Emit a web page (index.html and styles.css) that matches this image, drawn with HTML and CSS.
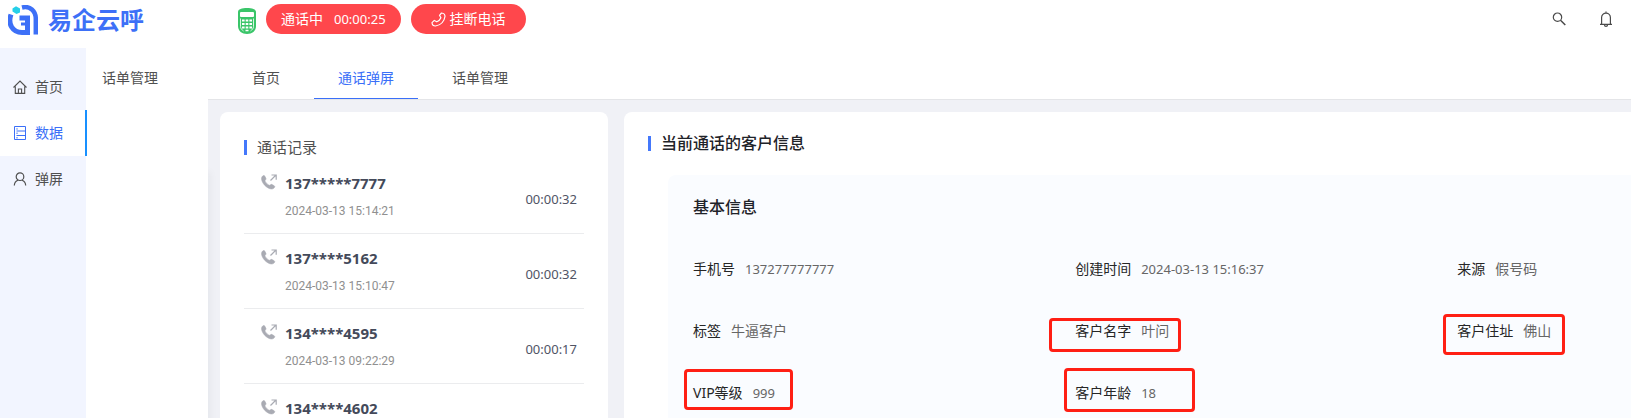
FILE: index.html
```
<!DOCTYPE html>
<html lang="zh-CN">
<head>
    <meta charset="UTF-8">
    <meta name="viewport" content="width=device-width, initial-scale=1.0">
    <title>易企云呼</title>
    <link rel="stylesheet" href="styles.css">
</head>
<body>
    <svg width="0" height="0" class="sprite" aria-hidden="true">
        <symbol id="call-out" viewBox="0 0 16 16">
            <path d="M1.2 2.600C2 1.400 3.200 1.200 3.700 2l1.200 2.300c.3.600.1 1.100-.5 1.600-.5.400-.5.900-.2 1.500.8 1.600 2 2.800 3.600 3.700.6.300 1.100.3 1.500-.2.5-.6 1.100-.7 1.700-.4l2.200 1.300c.8.500.7 1.600-.5 2.500-1.500 1-3.400.8-5.500-.3C4.600 12.600 2.200 10 1.100 7.200.4 5.300.3 3.800 1.200 2.600z" fill="#a9abb3" stroke="#a9abb3" stroke-width=".6"/>
            <path d="M9.500 6.500L14.500 1.500M10.500 1h4.700v4.700" fill="none" stroke="#a9abb3" stroke-width="1.200"/>
        </symbol>
    </svg>

    <header class="header">
        <a class="logo" href="#">
            <svg width="30" height="30" viewBox="0 0 30 30" fill="none" aria-hidden="true">
                <path d="M14 2.500C22 .5 27.800 6 27.800 14v15.500" stroke="#3d70f7" stroke-width="4.500"/>
                <path d="M3 9.500C-.5 19 4.500 27.500 14 27.500h5.500V13h-8" stroke="#3d70f7" stroke-width="5"/>
                <path d="M13 19h7" stroke="#3d70f7" stroke-width="3"/>
                <path d="M8 1.200l4 2.200v4L8.500 9 4.500 6.500v-3z" fill="#25cfe8"/>
            </svg>
            <span>易企云呼</span>
        </a>
        <div class="call-bar">
            <svg class="handset" width="18" height="26" viewBox="0 0 18 26" aria-hidden="true">
                <path d="M0 4C0 1 4 0 9 0s9 1 9 4v14c0 5-4 8-9 8s-9-3-9-8z" fill="#3ac569"/>
                <rect x="2" y="4" width="14" height="5" rx="1" fill="#fff"/>
                <path d="M2.500 10.500v8c0 2 1.500 3.500 3 4.500M15.500 10.500v8c0 2-1.500 3.500-3 4.500" fill="none" stroke="#fff" stroke-width=".8"/>
                <path d="M4 12.500h10M4 16h10M4 19.500h10" stroke="#fff" stroke-width="2.200" stroke-dasharray="2.600 1.100"/>
                <path d="M7.500 22.500h3" stroke="#fff" stroke-width="1.500"/>
            </svg>
            <button class="pill" type="button">通话中 <span class="num">00:00:25</span></button>
            <button class="pill hang-up" type="button">
                <svg width="15" height="15" viewBox="0 0 15 15" fill="none" stroke="#fff" stroke-width="1.200" stroke-linejoin="round" aria-hidden="true">
                    <path d="M10.500 1l-2 2.300 1.400 2.400c-.8 1.900-2.200 3.300-4.100 4.100L3.300 8.400 1 10.700C1.200 13 2.500 14 4.500 14 9.800 13 13.200 9.500 14 4.500 14 2.500 12.800 1.200 10.500 1z"/>
                </svg>
                挂断电话
            </button>
        </div>
        <div class="tools">
            <button type="button" aria-label="搜索">
                <svg width="14" height="14" viewBox="0 0 14 14" fill="none" stroke="#4a4a4a" stroke-width="1.200">
                    <circle cx="5.500" cy="5.200" r="4.200"/>
                    <path d="M8.500 8.200l4.800 4.800" stroke-width="1.500"/>
                </svg>
            </button>
            <button type="button" aria-label="通知">
                <svg width="14" height="16" viewBox="0 0 14 16" fill="none" stroke="#4a4a4a" stroke-width="1.200">
                    <path d="M1 13.300h12M2.600 13V6.500a4.400 4.400 0 0 1 8.800 0V13M5.500 14c0 1.800 3 1.800 3 0M7 .6v1.500"/>
                </svg>
            </button>
        </div>
    </header>

    <div class="layout">
        <nav class="sidebar">
            <a href="#">
                <svg width="14" height="14" viewBox="0 0 14 14" fill="none" stroke="currentColor" stroke-width="1.100">
                    <path d="M.5 7.500L7 1l6.500 6.500M2.300 6.500v6.900h9.400V6.500M5.400 13.400V9h3.200v4.400"/>
                </svg>
                首页
            </a>
            <a href="#" class="active">
                <svg width="14" height="14" viewBox="0 0 14 14" fill="none" stroke="currentColor">
                    <path d="M1.500.5h11v13h-11zM3.500 5h9M3.500 9.500h9"/>
                    <path d="M4 2.200v1.500M4 6.500v1.500M4 11v1.500"/>
                </svg>
                数据
            </a>
            <a href="#">
                <svg width="14" height="14" viewBox="0 0 14 14" fill="none" stroke="currentColor" stroke-width="1.200">
                    <circle cx="7" cy="4.700" r="3.800"/>
                    <path d="M1.300 13.500C1.500 10.500 3 9 5 8.300M12.700 13.500C12.500 10.500 11 9 9 8.300"/>
                </svg>
                弹屏
            </a>
        </nav>

        <nav class="submenu">
            <a href="#">话单管理</a>
            <div class="submenu-rest"></div>
        </nav>

        <main class="main">
            <nav class="tabs">
                <a href="#">首页</a>
                <a href="#" class="active">通话弹屏</a>
                <a href="#">话单管理</a>
            </nav>

            <div class="content">
                <section class="card records">
                    <h2 class="title">通话记录</h2>
                    <ul>
                        <li>
                            <svg width="16" height="16" aria-hidden="true"><use href="#call-out"/></svg>
                            <div class="who"><b>137*****7777</b><time>2024-03-13 15:14:21</time></div>
                            <span class="num">00:00:32</span>
                        </li>
                        <li>
                            <svg width="16" height="16" aria-hidden="true"><use href="#call-out"/></svg>
                            <div class="who"><b>137****5162</b><time>2024-03-13 15:10:47</time></div>
                            <span class="num">00:00:32</span>
                        </li>
                        <li>
                            <svg width="16" height="16" aria-hidden="true"><use href="#call-out"/></svg>
                            <div class="who"><b>134****4595</b><time>2024-03-13 09:22:29</time></div>
                            <span class="num">00:00:17</span>
                        </li>
                        <li>
                            <svg width="16" height="16" aria-hidden="true"><use href="#call-out"/></svg>
                            <div class="who"><b>134****4602</b></div>
                        </li>
                    </ul>
                </section>

                <section class="card customer">
                    <h2 class="title">当前通话的客户信息</h2>
                    <div class="panel">
                        <h3>基本信息</h3>
                        <dl class="fields">
                            <div><dt>手机号</dt><dd class="num">137277777777</dd></div>
                            <div><dt>创建时间</dt><dd class="num">2024-03-13 15:16:37</dd></div>
                            <div><dt>来源</dt><dd>假号码</dd></div>
                            <div><dt>标签</dt><dd>牛逼客户</dd></div>
                            <div class="mark mark-name"><dt>客户名字</dt><dd>叶问</dd></div>
                            <div class="mark mark-address"><dt>客户住址</dt><dd>佛山</dd></div>
                            <div class="mark mark-vip"><dt>VIP等级</dt><dd class="num">999</dd></div>
                            <div class="mark mark-age"><dt>客户年龄</dt><dd class="num">18</dd></div>
                        </dl>
                    </div>
                </section>
            </div>
        </main>
    </div>
</body>
</html>
```
FILE: styles.css
```
*,
*::before,
*::after {
    box-sizing: border-box;
}

body {
    margin: 0;
    height: 100vh;
    display: flex;
    flex-direction: column;
    overflow: hidden;
    background: #fff;
    color: #505050;
    font-family: "Noto Sans", "Noto Sans CJK SC", sans-serif;
    font-size: 14px;
    line-height: 22px;
}

a {
    color: inherit;
    text-decoration: none;
}

button {
    border: none;
    background: none;
    padding: 0;
    font: inherit;
    cursor: pointer;
}

h2, h3, ul, dl, dd {
    margin: 0;
    padding: 0;
}

svg {
    flex: none;
}

.sprite {
    position: absolute;
}

.num {
    font-size: 13px;
}

/* header */
.header {
    display: flex;
    flex: none;
    height: 48px;
    padding: 4px 18px 0 8px;
}

.logo {
    display: flex;
    width: 230px;
    height: 32px;
    align-items: center;
    gap: 10px;
    color: #3d70f7;
    font-size: 24px;
    font-weight: bold;
    line-height: 32px;
}

.call-bar {
    display: flex;
    height: 30px;
    gap: 10px;
}

.handset {
    margin-top: 4px;
}

.pill {
    display: flex;
    align-items: center;
    gap: 11px;
    height: 30px;
    padding: 0 15px;
    border-radius: 15px;
    background: #ff474c;
    color: #fff;
}

.hang-up {
    gap: 4px;
    padding: 0 20px;
}

.tools {
    display: flex;
    align-items: center;
    gap: 33px;
    height: 30px;
    margin-left: auto;
}

.tools button {
    display: flex;
}

/* navigation */
.layout {
    display: flex;
    flex: 1;
    min-height: 0;
}

.sidebar {
    position: relative;
    z-index: 2;
    flex: none;
    width: 86px;
    padding-top: 16px;
    background: #f2f5ff;
}

.sidebar a {
    display: flex;
    align-items: center;
    gap: 8px;
    height: 46px;
    padding-left: 13px;
}

.sidebar .active {
    margin-right: -1px;
    border-right: 2px solid #1890ff;
    background: #fff;
    color: #3a6ff8;
}

.submenu {
    position: relative;
    z-index: 1;
    display: flex;
    flex-direction: column;
    flex: none;
    width: 122px;
    background: #fff;
}

.submenu a {
    padding: 19px 16px;
}

.submenu-rest {
    flex: 1;
    margin-top: 56px;
    background: #fff;
    box-shadow: 2px 8px 8px rgba(29, 35, 41, 0.05);
    clip-path: inset(0 -12px 0 0);
}

.main {
    display: flex;
    flex-direction: column;
    flex: 1;
    min-width: 0;
    background: #f0f1f6;
}

.tabs {
    display: flex;
    flex: none;
    gap: 10px;
    height: 52px;
    padding-left: 20px;
    border-bottom: 1px solid #e4e5e8;
    background: #fff;
}

.tabs a {
    height: 51px;
    padding: 19px 24px 0;
}

.tabs .active {
    border-bottom: 1px solid #3a6ff8;
    color: #3a6ff8;
}

/* content */
.content {
    display: flex;
    flex: 1;
    gap: 16px;
    min-height: 0;
    padding: 12px 0 0 12px;
}

.card {
    padding: 0 24px;
    border-radius: 8px 8px 0 0;
    background: #fff;
    overflow: hidden;
}

.title {
    display: flex;
    align-items: center;
    gap: 10px;
    font-size: 16px;
    font-weight: 500;
}

.title::before {
    content: "";
    width: 3px;
    height: 15px;
    background: #4478fb;
}

.records {
    flex: none;
    width: 388px;
    padding-top: 24px;
}

.records .title {
    font-size: 15px;
    font-weight: 400;
}

.records ul {
    margin-top: 1px;
    list-style: none;
}

.records li {
    display: flex;
    height: 75px;
    padding: 13px 7px 0 17px;
    border-bottom: 1px solid #ebecee;
}

.records svg {
    margin-top: 2px;
}

.who {
    display: flex;
    flex-direction: column;
    flex: 1;
    gap: 6px;
    padding-left: 8px;
}

.who b {
    color: #444a5a;
    font-size: 15px;
}

.who time {
    color: #909090;
    font-family: Roboto, sans-serif;
    font-size: 12px;
}

.records .num {
    margin-top: 16px;
    color: #505465;
}

.customer {
    flex: 1;
    min-width: 0;
    padding: 20px 0 0 24px;
    border-top-right-radius: 0;
}

.customer .title {
    color: #1f2329;
}

.panel {
    height: 100%;
    margin: 21px 0 0 20px;
    padding: 21px 0 0 25px;
    border-radius: 8px 0 0 0;
    background: #fafcff;
}

.panel h3 {
    color: #1f2329;
    font-size: 16px;
    font-weight: 500;
}

.fields {
    display: grid;
    grid-template-columns: 11fr 11fr 5fr;
    grid-auto-rows: 62px;
    margin-top: 20px;
}

.fields div {
    position: relative;
    display: flex;
    align-items: center;
    gap: 10px;
    min-width: 0;
    white-space: nowrap;
}

.fields dt {
    color: #262626;
}

.fields dd {
    color: #666;
}

/* red frames drawn over the custom fields */
.mark::after {
    content: "";
    position: absolute;
    border: 3px solid #ff1f14;
    border-radius: 4px;
}

.mark-name::after {
    left: -26px;
    top: 18px;
    width: 132px;
    height: 34px;
}

.mark-address::after {
    left: -14px;
    top: 14px;
    width: 122px;
    height: 41px;
}

.mark-vip::after {
    left: -9px;
    top: 7px;
    width: 109px;
    height: 41px;
}

.mark-age::after {
    left: -11px;
    top: 6px;
    width: 131px;
    height: 44px;
}
```
